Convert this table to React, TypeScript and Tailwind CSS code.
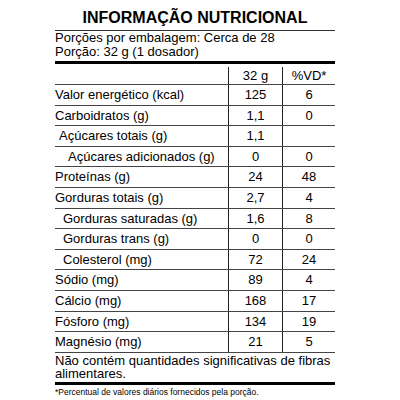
import React from 'react';

type Row = { label: string; qty: string; vd: string; indent?: string };

const rows: Row[] = [
  { label: 'Valor energético (kcal)', qty: '125', vd: '6' },
  { label: 'Carboidratos (g)', qty: '1,1', vd: '0' },
  { label: 'Açúcares totais (g)', qty: '1,1', vd: '', indent: 'pl-[4px]' },
  { label: 'Açúcares adicionados (g)', qty: '0', vd: '0', indent: 'pl-[13px]' },
  { label: 'Proteínas (g)', qty: '24', vd: '48' },
  { label: 'Gorduras totais (g)', qty: '2,7', vd: '4' },
  { label: 'Gorduras saturadas (g)', qty: '1,6', vd: '8', indent: 'pl-[8px]' },
  { label: 'Gorduras trans (g)', qty: '0', vd: '0', indent: 'pl-[8px]' },
  { label: 'Colesterol (mg)', qty: '72', vd: '24', indent: 'pl-[8px]' },
  { label: 'Sódio (mg)', qty: '89', vd: '4' },
  { label: 'Cálcio (mg)', qty: '168', vd: '17' },
  { label: 'Fósforo (mg)', qty: '134', vd: '19' },
  { label: 'Magnésio (mg)', qty: '21', vd: '5' },
];

const App: React.FC = () => {
  return (
    <div className="w-[400px] h-[400px] bg-white text-black font-['Liberation_Sans',Arial,sans-serif]">
      <div className="ml-[55px] w-[280px] pt-[9px]">
        <h1 className="text-center text-[16px] leading-[18px] font-bold pb-[3px] border-b border-[#333]">
          INFORMAÇÃO NUTRICIONAL
        </h1>
        <div className="text-[13px] leading-[14px] pt-[0px]">
          <p>Porções por embalagem: Cerca de 28</p>
          <p>Porção: 32 g (1 dosador)</p>
        </div>
        <div className="mt-[2px] h-[3px] bg-black" />

        <div className="text-[13px]">
          <div className="flex h-[21px] border-b border-[#444]">
            <div className="flex-1" />
            <div className="w-[54px] mt-[3px] border-l border-[#222] text-center leading-[17px]">32 g</div>
            <div className="w-[53px] mt-[3px] border-l border-[#222] text-center leading-[17px]">%VD*</div>
          </div>
          {rows.map((r, i) => (
            <div key={i} className="flex h-[20.6px] border-b border-[#444] items-stretch">
              <div className={`flex-1 flex items-center ${r.indent ?? ''}`}>{r.label}</div>
              <div className="w-[54px] border-l border-[#222] flex items-center justify-center">{r.qty}</div>
              <div className="w-[53px] border-l border-[#222] flex items-center justify-center">{r.vd}</div>
            </div>
          ))}
        </div>

        <p className="text-[13px] leading-[13.5px] pt-[1px]">
          Não contém quantidades significativas de fibras alimentares.
        </p>
        <div className="mt-[1px] h-[3px] bg-black" />
        <p className="text-[8.5px] leading-[10px] pt-[2px]">
          *Percentual de valores diários fornecidos pela porção.
        </p>
      </div>
    </div>
  );
};

export default App;
